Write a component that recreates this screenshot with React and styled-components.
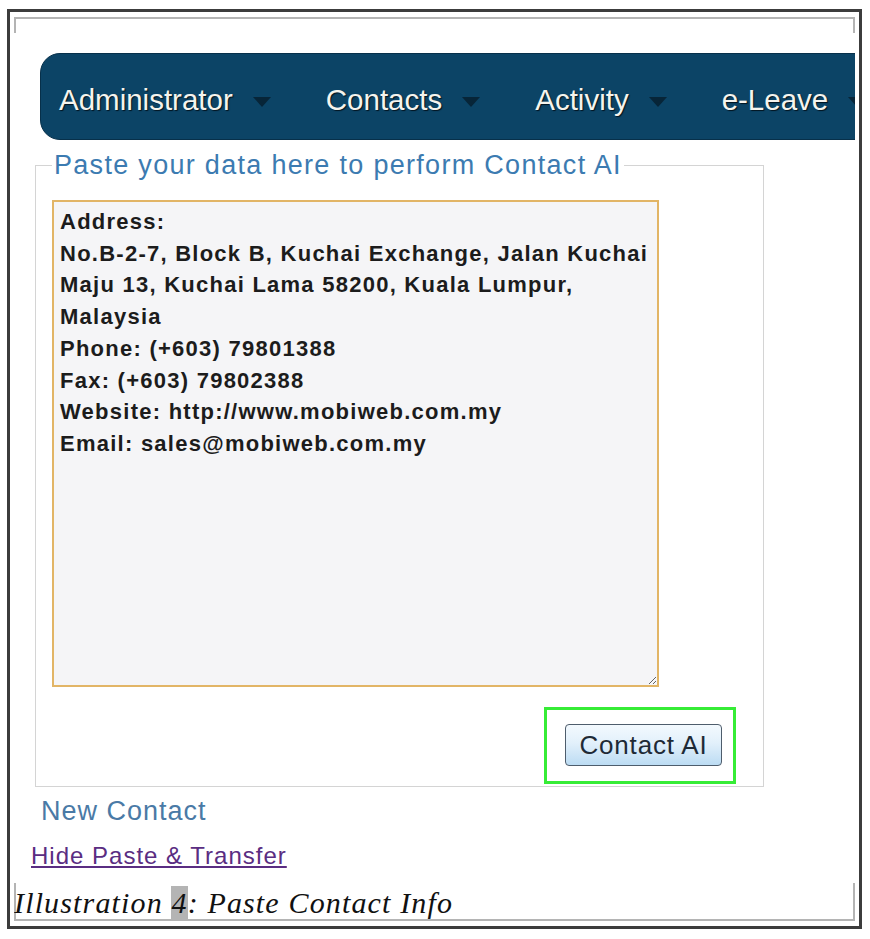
import React from 'react';
import styled, { createGlobalStyle } from 'styled-components';

const GlobalStyle = createGlobalStyle`
  body {
    margin: 0;
    background: #ffffff;
    font-family: 'Liberation Sans', Arial, sans-serif;
  }
`;

const menuItems = ['Administrator', 'Contacts', 'Activity', 'e-Leave'];

const contactText = `Address:
No.B-2-7, Block B, Kuchai Exchange, Jalan Kuchai Maju 13, Kuchai Lama 58200, Kuala Lumpur, Malaysia
Phone: (+603) 79801388
Fax: (+603) 79802388
Website: http://www.mobiweb.com.my
Email: sales@mobiweb.com.my`;

export default function App() {
  return (
    <>
      <GlobalStyle />
      <Frame>
        <Page>
          <NavBar>
            {menuItems.map((item) => (
              <NavItem key={item}>
                {item}
                <Caret />
              </NavItem>
            ))}
          </NavBar>

          <PasteBox>
            <Legend>Paste your data here to perform Contact AI</Legend>
            <DataArea defaultValue={contactText} spellCheck={false} />
            <ButtonRow>
              <Highlight>
                <ActionButton>Contact AI</ActionButton>
              </Highlight>
            </ButtonRow>
          </PasteBox>

          <SectionTitle>New Contact</SectionTitle>
          <ToggleLink href="#">Hide Paste &amp; Transfer</ToggleLink>
          <Caption>
            Illustration <Marked>4</Marked>: Paste Contact Info
          </Caption>
        </Page>
      </Frame>
    </>
  );
}

const Frame = styled.div`
  box-sizing: border-box;
  width: 855px;
  height: 920px;
  margin: 9px 0 0 7px;
  border: 3px solid #3c3c3c;
  padding: 5px 4px 5px 4px;
`;

const Page = styled.div`
  box-sizing: border-box;
  height: 100%;
  overflow: hidden;
  border-top: 2px solid #b4b4b4;
  border-bottom: 2px solid #b4b4b4;
  background:
    linear-gradient(#b4b4b4, #b4b4b4) left top / 2px 14px no-repeat,
    linear-gradient(#b4b4b4, #b4b4b4) right top / 2px 14px no-repeat,
    linear-gradient(#b4b4b4, #b4b4b4) left bottom / 2px 36px no-repeat,
    linear-gradient(#b4b4b4, #b4b4b4) right bottom / 2px 36px no-repeat;
  display: flex;
  flex-direction: column;
  align-items: flex-start;
`;

const NavBar = styled.nav`
  box-sizing: border-box;
  width: 860px;
  height: 87px;
  margin: 34px 0 0 26px;
  flex-shrink: 0;
  background: #0c4466;
  border-radius: 20px 0 0 20px;
  border: 1px solid #07304a;
  display: flex;
  align-items: center;
  padding: 6px 0 0 18px;
  gap: 55px;
`;

const NavItem = styled.div`
  display: flex;
  align-items: center;
  gap: 20px;
  font-size: 29.5px;
  color: #f5f4ee;
  text-shadow: 1px 1px 1px #021420;
  white-space: nowrap;
`;

const Caret = styled.span`
  width: 0;
  height: 0;
  margin-top: 4px;
  border-left: 9px solid transparent;
  border-right: 9px solid transparent;
  border-top: 10px solid #072538;
`;

const PasteBox = styled.fieldset`
  box-sizing: border-box;
  width: 729px;
  margin: 10px 0 0 21px;
  padding: 20px 27px 2px 16px;
  border: 1px solid #d4d4d4;
  display: flex;
  flex-direction: column;
  align-items: flex-start;
`;

const Legend = styled.legend`
  padding: 0 2px;
  font-size: 27px;
  line-height: 30px;
  letter-spacing: 1.3px;
  color: #3c7bb1;
`;

const DataArea = styled.textarea`
  box-sizing: border-box;
  width: 607px;
  height: 487px;
  margin: 0;
  padding: 4px 3px 4px 6px;
  border: 2px solid #e2b566;
  background: #f5f5f7;
  font-family: 'Liberation Sans', Arial, sans-serif;
  font-weight: bold;
  font-size: 22px;
  line-height: 31.7px;
  letter-spacing: 1.25px;
  color: #1c1c1c;
  resize: both;
  outline: none;
  overflow: hidden;
`;

const ButtonRow = styled.div`
  align-self: stretch;
  display: flex;
  justify-content: flex-end;
  margin-top: 20px;
`;

const Highlight = styled.div`
  border: 3px solid #36ec36;
  padding: 14px 11px 15px 18px;
`;

const ActionButton = styled.button`
  box-sizing: border-box;
  width: 157px;
  height: 42px;
  border: 1px solid #4e5d6c;
  border-radius: 4px;
  background: linear-gradient(#f3f9fe 0%, #e2f0fb 45%, #bcdcf3 100%);
  font-family: 'Liberation Sans', Arial, sans-serif;
  font-size: 26px;
  letter-spacing: 0.8px;
  color: #1e2a36;
  padding: 0;
`;

const SectionTitle = styled.div`
  margin: 9px 0 0 27px;
  font-size: 27px;
  line-height: 30px;
  letter-spacing: 1px;
  color: #4a7aa6;
`;

const ToggleLink = styled.a`
  margin: 16px 0 0 17px;
  font-size: 24px;
  line-height: 28px;
  letter-spacing: 1px;
  color: #5a2d82;
  text-decoration: underline;
`;

const Caption = styled.div`
  margin: 16px 0 0 0;
  font-family: 'Liberation Serif', 'Times New Roman', serif;
  font-style: italic;
  font-size: 30px;
  line-height: 34px;
  letter-spacing: 1.15px;
  color: #111111;
  white-space: nowrap;
`;

const Marked = styled.span`
  background: #b4b4b4;
`;
